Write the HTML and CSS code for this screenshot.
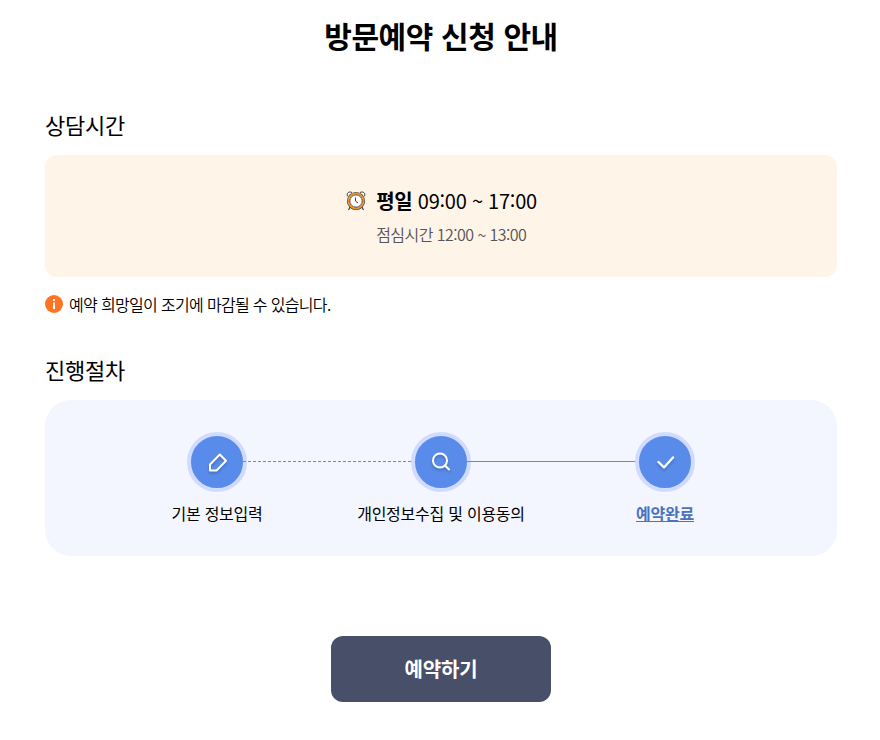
FILE: index.html
```html
<!DOCTYPE html>
<html lang="ko">
<head>
    <meta charset="UTF-8">
    <meta name="viewport" content="width=device-width, initial-scale=1.0">
    <title>방문예약 신청 안내</title>
    <link rel="stylesheet" href="styles.css">
</head>
<body>
    <main class="container">
        <h1>방문예약 신청 안내</h1>

        <section class="time">
            <h2>상담시간</h2>
            <div class="time-box">
                <svg class="clock" width="22" height="22" viewBox="0 0 22 22" fill="none">
                    <path d="M5.5 16.5L3.5 20M16.500 16.500L18.500 20" stroke="#3d3d46" stroke-width="1.200"/>
                    <path d="M2.500 6.200C1.200 3 4 1 7 2.500M19.500 6.200C20.800 3 18 1 15 2.500" fill="#fff" stroke="#3d3d46"/>
                    <circle cx="11" cy="11" r="7.700" fill="#fff" stroke="#3d3d46" stroke-width="2.800"/>
                    <circle cx="11" cy="11" r="7.500" stroke="#ec942c" stroke-width="2"/>
                    <circle cx="11" cy="11" r="6" fill="#fff" stroke="#55525a" stroke-width=".7"/>
                    <path d="M10.500 7.500V11L13 13" stroke="#3d3d46"/>
                </svg>
                <div class="time-text">
                    <p class="hours"><strong>평일</strong> 09:00 ~ 17:00</p>
                    <p class="lunch">점심시간 12:00 ~ 13:00</p>
                </div>
            </div>
            <p class="notice">
                <svg width="18" height="18" viewBox="0 0 18 18">
                    <circle cx="9" cy="9" r="9" fill="#ff7420"/>
                    <path d="M8 4h2v2H8zM8 7.500h2V14H8z" fill="#fff"/>
                </svg>
                예약 희망일이 조기에 마감될 수 있습니다.
            </p>
        </section>

        <section class="process">
            <h2>진행절차</h2>
            <ol class="steps">
                <li class="step dashed">
                    <span class="circle">
                        <svg width="24" height="24" viewBox="0 0 24 24">
                            <path d="M5 20.500V14.500L14.800 4.500L21 10.800L11.500 20.500Z"/>
                        </svg>
                    </span>
                    <span class="label">기본 정보입력</span>
                </li>
                <li class="step solid">
                    <span class="circle">
                        <svg width="24" height="24" viewBox="0 0 24 24">
                            <circle cx="11" cy="10.500" r="7"/>
                            <path d="M16 15.500L20 19.500"/>
                        </svg>
                    </span>
                    <span class="label">개인정보수집 및 이용동의</span>
                </li>
                <li class="step done">
                    <span class="circle">
                        <svg width="24" height="24" viewBox="0 0 24 24">
                            <path d="M5.500 12L11 17.500L20 7.500"/>
                        </svg>
                    </span>
                    <span class="label">예약완료</span>
                </li>
            </ol>
        </section>

        <button type="button" class="reserve-btn">예약하기</button>
    </main>
</body>
</html>
```
FILE: styles.css
```css
* {
    box-sizing: border-box;
    margin: 0;
    padding: 0;
}

body {
    font-family: 'Noto Sans CJK KR', sans-serif;
    font-size: 16px;
    letter-spacing: -0.25px;
    color: #000;
    background: #fff;
}

.container {
    width: 792px;
    margin-left: 45px;
    padding-top: 13px;
}

h1 {
    font-size: 30px;
    font-weight: 700;
    line-height: 44px;
    letter-spacing: -0.4px;
    text-align: center;
}

h2 {
    font-size: 22px;
    font-weight: 400;
    line-height: 32px;
    margin-bottom: 15px;
}

.time {
    margin-top: 51px;
}

.time-box {
    display: flex;
    justify-content: center;
    gap: 9px;
    height: 122px;
    padding-top: 35px;
    background: #fff4e8;
    border-radius: 12px;
}

.time-text {
    margin-top: -4px;
}

.hours {
    font-size: 20px;
    line-height: 30px;
}

.lunch {
    margin-top: 6px;
    font-weight: 350;
    line-height: 24px;
    letter-spacing: -0.55px;
    color: #555;
}

.notice {
    display: flex;
    align-items: center;
    gap: 6px;
    margin-top: 15px;
    font-weight: 350;
    line-height: 24px;
    letter-spacing: -0.67px;
}

.process {
    margin-top: 37px;
}

.steps {
    display: flex;
    justify-content: center;
    height: 156px;
    padding-top: 32px;
    list-style: none;
    background: #f3f6fe;
    border-radius: 26px;
}

.step {
    display: flex;
    flex-direction: column;
    align-items: center;
    width: 224px;
}

.circle {
    position: relative;
    display: flex;
    align-items: center;
    justify-content: center;
    width: 60px;
    height: 60px;
    background: #588bea;
    border: 4px solid #d0dbfe;
    border-radius: 50%;
}

.circle svg {
    fill: none;
    stroke: #fff;
    stroke-width: 2;
    stroke-linecap: round;
    stroke-linejoin: round;
    filter: drop-shadow(0 2px 1px rgba(0, 0, 0, 0.2));
}

/* connector to the next step */
.dashed .circle::after,
.solid .circle::after {
    content: '';
    position: absolute;
    top: 25px;
    left: 100%;
    width: 168px;
    border-top: 1px dashed #588bea;
}

.solid .circle::after {
    border-top-style: solid;
}

.label {
    margin-top: 9px;
    line-height: 24px;
}

.done .label {
    font-weight: 700;
    color: #4a72bf;
    text-decoration: underline;
}

.done .circle svg {
    stroke-width: 2.4;
}

.reserve-btn {
    display: block;
    width: 220px;
    height: 66px;
    margin: 80px auto 0;
    padding-bottom: 2px;
    font-family: inherit;
    font-size: 20px;
    font-weight: 700;
    letter-spacing: -0.2px;
    color: #fff;
    background: #484f69;
    border: 0;
    border-radius: 12px;
    cursor: pointer;
}
```
